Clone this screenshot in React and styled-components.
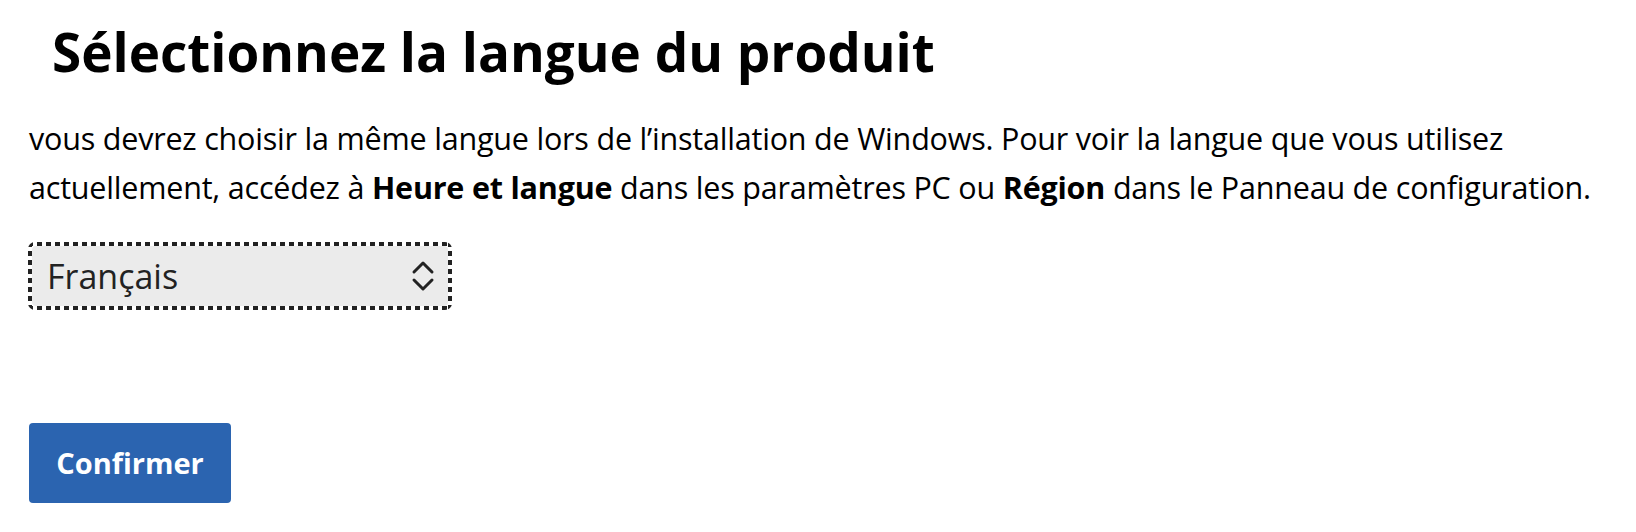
import React from "react";
import styled, { createGlobalStyle } from "styled-components";

const GlobalStyle = createGlobalStyle`
  body {
    margin: 0;
    background: #fff;
    font-family: "Open Sans", "Noto Sans", sans-serif;
    color: #000;
  }
`;

const Page = styled.main`
  padding: 0 10px 0 29px;
  display: flex;
  flex-direction: column;
  align-items: flex-start;
`;

const Title = styled.h1`
  margin: 18px 0 0 23px;
  font-size: 53px;
  font-weight: 700;
  line-height: 1.3;
`;

const Intro = styled.p`
  margin: 27px 0 0;
  font-size: 30.5px;
  line-height: 49px;
  letter-spacing: -0.2px;
`;

const FocusRing = styled.div`
  position: relative;
  margin: 30px 0 0 -1px;
  width: 424px;
  height: 68px;
  padding: 4px;
  box-sizing: border-box;
  border-radius: 7px;
  background:
    repeating-linear-gradient(90deg, #222 0 5px, transparent 5px 9px) top / 100% 4px no-repeat,
    repeating-linear-gradient(90deg, #222 0 5px, transparent 5px 9px) bottom / 100% 4px no-repeat,
    repeating-linear-gradient(180deg, #222 0 5px, transparent 5px 9px) left / 4px 100% no-repeat,
    repeating-linear-gradient(180deg, #222 0 5px, transparent 5px 9px) right / 4px 100% no-repeat;
`;

const LangSelect = styled.select`
  appearance: none;
  width: 100%;
  height: 100%;
  border: none;
  border-radius: 4px;
  background: #ebebeb;
  color: #222;
  font-family: "Open Sans", "Noto Sans", sans-serif;
  font-size: 34px;
  padding: 0 56px 0 15px;
  outline: none;
`;

const Chevrons = styled.svg`
  position: absolute;
  right: 17px;
  top: 50%;
  transform: translateY(-50%);
  pointer-events: none;
`;

const ConfirmButton = styled.button`
  margin-top: 113px;
  width: 202px;
  height: 80px;
  border: none;
  border-radius: 4px;
  background: #2b64b0;
  color: #fff;
  font-family: "Open Sans", "Noto Sans", sans-serif;
  font-size: 29px;
  font-weight: 700;
  cursor: pointer;
`;

const App = () => {
  return (
    <>
      <GlobalStyle />
      <Page>
        <Title>Sélectionnez la langue du produit</Title>
        <Intro>
          vous devrez choisir la même langue lors de l’installation de Windows. Pour voir la langue que vous utilisez
          actuellement, accédez à <b>Heure et langue</b> dans les paramètres PC ou <b>Région</b> dans le Panneau de
          configuration.
        </Intro>
        <FocusRing>
          <LangSelect defaultValue="fr">
            <option value="fr">Français</option>
          </LangSelect>
          <Chevrons width="24" height="34" viewBox="0 0 24 34" fill="none" stroke="#222" strokeWidth="3" strokeLinecap="round" strokeLinejoin="round">
            <path d="M3 13 L12 4 L21 13" />
            <path d="M3 21 L12 30 L21 21" />
          </Chevrons>
        </FocusRing>
        <ConfirmButton>Confirmer</ConfirmButton>
      </Page>
    </>
  );
};

export default App;
